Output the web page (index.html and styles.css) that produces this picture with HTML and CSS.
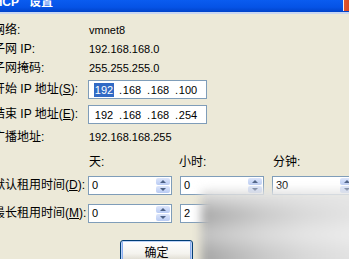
FILE: index.html
```html
<!DOCTYPE html>
<html lang="zh-CN">
<head>
    <title>DHCP 设置</title>
    <link rel="stylesheet" href="styles.css">
</head>
<body>
    <div class="window">
        <div class="titlebar">
            <span class="title">DHCP</span><span class="title title-cn">设置</span>
            <span class="close"></span>
        </div>

        <div class="form">
            <div class="row text-row first">
                <span class="label">网络:</span>
                <span class="value">vmnet8</span>
            </div>
            <div class="row text-row">
                <span class="label">子网 IP:</span>
                <span class="value">192.168.168.0</span>
            </div>
            <div class="row text-row">
                <span class="label">子网掩码:</span>
                <span class="value">255.255.255.0</span>
            </div>

            <div class="row ip-row start">
                <span class="label">开始 IP 地址(<u>S</u>):</span>
                <div class="ip-box">
                    <span class="octet selected">192</span><span class="dot">.</span><span class="octet">168</span><span class="dot">.</span><span class="octet">168</span><span class="dot">.</span><span class="octet">100</span>
                </div>
            </div>
            <div class="row ip-row end">
                <span class="label">结束 IP 地址(<u>E</u>):</span>
                <div class="ip-box">
                    <span class="octet">192</span><span class="dot">.</span><span class="octet">168</span><span class="dot">.</span><span class="octet">168</span><span class="dot">.</span><span class="octet">254</span>
                </div>
            </div>

            <div class="row text-row broadcast">
                <span class="label">广播地址:</span>
                <span class="value">192.168.168.255</span>
            </div>

            <div class="row heads">
                <span class="label"></span>
                <div class="cols">
                    <span class="head">天:</span>
                    <span class="head hour">小时:</span>
                    <span class="head">分钟:</span>
                </div>
            </div>

            <div class="row spin-row first-spin">
                <span class="label">默认租用时间(<u>D</u>):</span>
                <div class="cols">
                    <div class="spin"><span class="num">0</span><span class="arrows"><i class="up"></i><i class="down"></i></span></div>
                    <div class="spin"><span class="num">0</span><span class="arrows"><i class="up"></i><i class="down"></i></span></div>
                    <div class="spin"><span class="num">30</span><span class="arrows"><i class="up"></i><i class="down"></i></span></div>
                </div>
            </div>
            <div class="row spin-row second-spin">
                <span class="label">最长租用时间(<u>M</u>):</span>
                <div class="cols">
                    <div class="spin"><span class="num">0</span><span class="arrows"><i class="up"></i><i class="down"></i></span></div>
                    <div class="spin"><span class="num">2</span><span class="arrows"><i class="up"></i><i class="down"></i></span></div>
                    <div class="spin"><span class="num">0</span><span class="arrows"><i class="up"></i><i class="down"></i></span></div>
                </div>
            </div>

            <div class="footer">
                <button type="button" class="ok-button">确定</button>
            </div>
        </div>

        <!-- blurred watermark in the corner of the screenshot -->
        <div class="smudge"></div>
    </div>
</body>
</html>
```

FILE: styles.css
```css
body {
    margin: 0;
    padding: 0;
    background-color: #ece9d8;
    font-family: "Liberation Sans", "Noto Sans CJK SC", sans-serif;
    font-size: 12px;
    color: #000;
}

.window {
    position: relative;
    width: 349px;
    height: 259px;
    overflow: hidden;
    background-color: #ece9d8;
}

.titlebar {
    display: flex;
    height: 12px;
    background: linear-gradient(#0a5cf0, #0553e6 60%, #0143c9);
    border-bottom: 2px solid #c8d6f2;
    overflow: hidden;
}

.title {
    color: #fff;
    font-weight: bold;
    font-size: 12px;
    line-height: 12px;
    margin-top: -4px;
    margin-left: -15px;
    white-space: nowrap;
}

.title-cn {
    margin-left: 10px;
}

.close {
    margin-left: auto;
    width: 6px;
    height: 11px;
    background: linear-gradient(90deg, #f4f0f0 0, #f4f0f0 1px, #e0572f 1px, #d64a24);
}

.form {
    display: flex;
    flex-direction: column;
    margin-left: -7px;
    padding-top: 7px;
}

.row {
    display: grid;
    grid-template-columns: 95px 1fr;
    height: 19px;
    line-height: 19px;
    white-space: nowrap;
}

.value {
    font-size: 11px;
    padding-left: 1px;
}

.ip-row.start { margin-top: 2px; }
.ip-row.end { margin-top: 6px; }
.broadcast { margin-top: 4px; }
.heads { margin-top: 6px; }
.first-spin { margin-top: 4px; }
.second-spin { margin-top: 9px; }

.ip-box {
    display: flex;
    align-items: center;
    width: 119px;
    height: 19px;
    box-sizing: border-box;
    border: 1px solid #7f9db9;
    background-color: #fff;
    padding-left: 5px;
    font-size: 11px;
}

.octet {
    width: 20px;
    height: 14px;
    line-height: 14px;
    text-align: center;
}

.octet.selected {
    background-color: #316ac5;
    color: #fff;
}

.dot {
    width: 8px;
    text-align: right;
    line-height: 14px;
}

.cols {
    display: grid;
    grid-template-columns: 84px 84px 84px;
    column-gap: 8px;
}

.head {
    padding-left: 1px;
}

.head.hour {
    margin-left: -2px;
}

.spin {
    display: flex;
    height: 19px;
    box-sizing: border-box;
    border: 1px solid #7f9db9;
    background-color: #fff;
}

.num {
    flex: 1;
    font-size: 11px;
    line-height: 17px;
    padding-left: 3px;
}

.arrows {
    display: flex;
    flex-direction: column;
    width: 14px;
    padding: 1px 1px 1px 0;
    gap: 1px;
}

.arrows i {
    position: relative;
    flex: 1;
    background: linear-gradient(#dde6fb, #b9cbf3);
    border-radius: 2px;
}

.arrows i::after {
    content: "";
    position: absolute;
    left: 4px;
    width: 0;
    height: 0;
    border-left: 3px solid transparent;
    border-right: 3px solid transparent;
}

.arrows .up::after {
    top: 2px;
    border-bottom: 3px solid #4d6185;
}

.arrows .down::after {
    top: 2px;
    border-top: 3px solid #4d6185;
}

.footer {
    margin-top: 17px;
    padding-left: 127px;
}

.ok-button {
    width: 73px;
    height: 23px;
    padding: 0;
    border: 1px solid #003c74;
    border-radius: 3px;
    background: linear-gradient(#ffffff, #f4f3ee 60%, #d8d4c8);
    box-shadow: inset 0 0 0 1px #bcd2f6, inset 0 -1px 0 2px #89adf0;
    font-family: "Liberation Sans", "Noto Sans CJK SC", sans-serif;
    font-size: 12px;
    color: #000;
}

.smudge {
    position: absolute;
    left: 201px;
    top: 190px;
    right: -12px;
    bottom: -12px;
    background:
        linear-gradient(#e8e8e8 0, rgba(232, 232, 232, 0) 30%, rgba(255, 255, 255, 0.35) 55%, rgba(200, 200, 200, 0) 80%),
        linear-gradient(90deg, #a4a4a4 0%, #b6b6b6 18%, #c9c9c9 40%, #d8d8d8 65%, #e4e4e4 100%);
    filter: blur(5px);
}
```
